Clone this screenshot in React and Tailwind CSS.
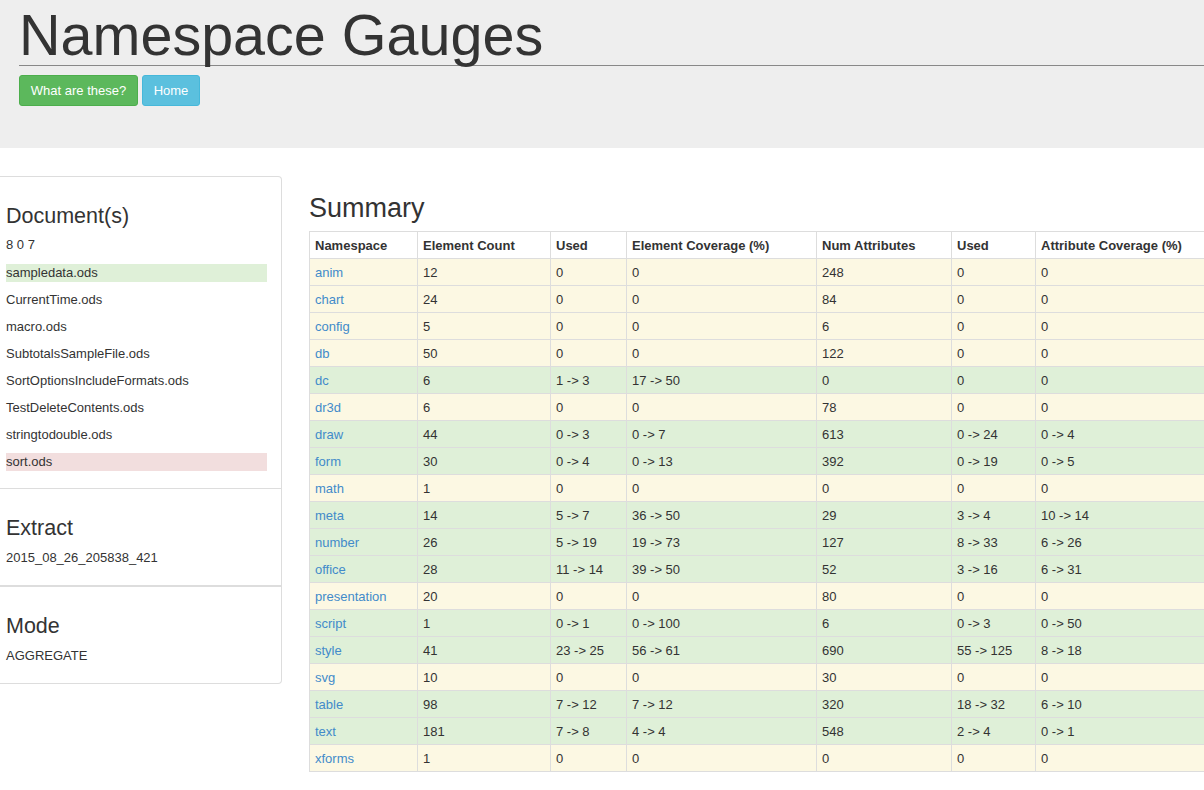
const DOCS = [
  { name: 'sampledata.ods', tone: 'bg-[#dff0d8]' },
  { name: 'CurrentTime.ods' },
  { name: 'macro.ods' },
  { name: 'SubtotalsSampleFile.ods' },
  { name: 'SortOptionsIncludeFormats.ods' },
  { name: 'TestDeleteContents.ods' },
  { name: 'stringtodouble.ods' },
  { name: 'sort.ods', tone: 'bg-[#f2dede]' },
]

const COLS = [
  { label: 'Namespace', w: 'w-[108px]' },
  { label: 'Element Count', w: 'w-[133px]' },
  { label: 'Used', w: 'w-[76px]' },
  { label: 'Element Coverage (%)', w: 'w-[190px]' },
  { label: 'Num Attributes', w: 'w-[135px]' },
  { label: 'Used', w: 'w-[84px]' },
  { label: 'Attribute Coverage (%)', w: 'w-[220px]' },
]

// s = success (green), w = warning (yellow)
const ROWS = [
  ['w', 'anim', '12', '0', '0', '248', '0', '0'],
  ['w', 'chart', '24', '0', '0', '84', '0', '0'],
  ['w', 'config', '5', '0', '0', '6', '0', '0'],
  ['w', 'db', '50', '0', '0', '122', '0', '0'],
  ['s', 'dc', '6', '1 -> 3', '17 -> 50', '0', '0', '0'],
  ['w', 'dr3d', '6', '0', '0', '78', '0', '0'],
  ['s', 'draw', '44', '0 -> 3', '0 -> 7', '613', '0 -> 24', '0 -> 4'],
  ['s', 'form', '30', '0 -> 4', '0 -> 13', '392', '0 -> 19', '0 -> 5'],
  ['w', 'math', '1', '0', '0', '0', '0', '0'],
  ['s', 'meta', '14', '5 -> 7', '36 -> 50', '29', '3 -> 4', '10 -> 14'],
  ['s', 'number', '26', '5 -> 19', '19 -> 73', '127', '8 -> 33', '6 -> 26'],
  ['s', 'office', '28', '11 -> 14', '39 -> 50', '52', '3 -> 16', '6 -> 31'],
  ['w', 'presentation', '20', '0', '0', '80', '0', '0'],
  ['s', 'script', '1', '0 -> 1', '0 -> 100', '6', '0 -> 3', '0 -> 50'],
  ['s', 'style', '41', '23 -> 25', '56 -> 61', '690', '55 -> 125', '8 -> 18'],
  ['w', 'svg', '10', '0', '0', '30', '0', '0'],
  ['s', 'table', '98', '7 -> 12', '7 -> 12', '320', '18 -> 32', '6 -> 10'],
  ['s', 'text', '181', '7 -> 8', '4 -> 4', '548', '2 -> 4', '0 -> 1'],
  ['w', 'xforms', '1', '0', '0', '0', '0', '0'],
]

function Section({ title, children, border, gap = 'mt-[9px]' }) {
  return (
    <div className={`px-[6px] pt-[27px] ${border}`}>
      <h3 className="text-[21.5px] leading-[24px] text-[#333]">{title}</h3>
      <div className={gap}>{children}</div>
    </div>
  )
}

function Sidebar() {
  return (
    <div className="w-[282px] shrink-0 mt-[28px] self-start border border-l-0 border-[#ddd] rounded-r-[4px] bg-white">
      <Section title="Document(s)" gap="mt-[8px]">
        <div className="text-[13px] leading-[17px] text-[#333]">8 0 7</div>
        <ul className="mt-[11px] mr-[8px] pb-[8px]">
          {DOCS.map((d) => (
            <li key={d.name} className={`h-[18px] leading-[18px] text-[13px] text-[#333] mb-[9px] ${d.tone || ''}`}>
              {d.name}
            </li>
          ))}
        </ul>
      </Section>
      <Section title="Extract" border="border-t border-[#ddd]">
        <div className="text-[13px] leading-[17px] text-[#333] pb-[19px]">2015_08_26_205838_421</div>
      </Section>
      <Section title="Mode" border="border-t-2 border-[#ddd]">
        <div className="text-[13px] leading-[17px] text-[#333] pb-[19px]">AGGREGATE</div>
      </Section>
    </div>
  )
}

function SummaryTable() {
  return (
    <table className="border-collapse text-[13px] text-[#333] table-fixed w-[946px]">
      <thead>
        <tr className="h-[27px]">
          {COLS.map((c, i) => (
            <th key={i} className={`${c.w} border border-[#ddd] px-[5px] pt-[2px] text-left font-bold`}>
              {c.label}
            </th>
          ))}
        </tr>
      </thead>
      <tbody>
        {ROWS.map(([tone, ns, ...vals]) => (
          <tr key={ns} className={`h-[27px] ${tone === 's' ? 'bg-[#dff0d8]' : 'bg-[#fcf8e3]'}`}>
            <td className="border border-[#ddd] px-[5px] pt-[2px]">
              <a href="#" className="text-[#428bca]">{ns}</a>
            </td>
            {vals.map((v, i) => (
              <td key={i} className="border border-[#ddd] px-[5px] pt-[2px]">{v}</td>
            ))}
          </tr>
        ))}
      </tbody>
    </table>
  )
}

export default function App() {
  return (
    <div className="w-[1204px] min-h-[790px] overflow-hidden bg-white font-['Liberation_Sans',Arial,sans-serif]">
      <div className="h-[148px] bg-[#eee] pl-[19px] pt-[5px]">
        <h1 className="text-[57.5px] leading-[60px] text-[#333] border-b border-[#888]">
          Namespace Gauges
        </h1>
        <div className="flex gap-[4px] mt-[9px]">
          <button className="h-[31px] w-[119px] bg-[#5cb85c] border border-[#4cae4c] rounded-[3px] text-white text-[13px]">
            What are these?
          </button>
          <button className="h-[31px] w-[58px] bg-[#5bc0de] border border-[#46b8da] rounded-[3px] text-white text-[13px]">
            Home
          </button>
        </div>
      </div>
      <div className="flex">
        <Sidebar />
        <div className="ml-[27px] pt-[45px]">
          <h2 className="text-[27px] leading-[30px] text-[#333] mb-[8px]">Summary</h2>
          <SummaryTable />
        </div>
      </div>
    </div>
  )
}
